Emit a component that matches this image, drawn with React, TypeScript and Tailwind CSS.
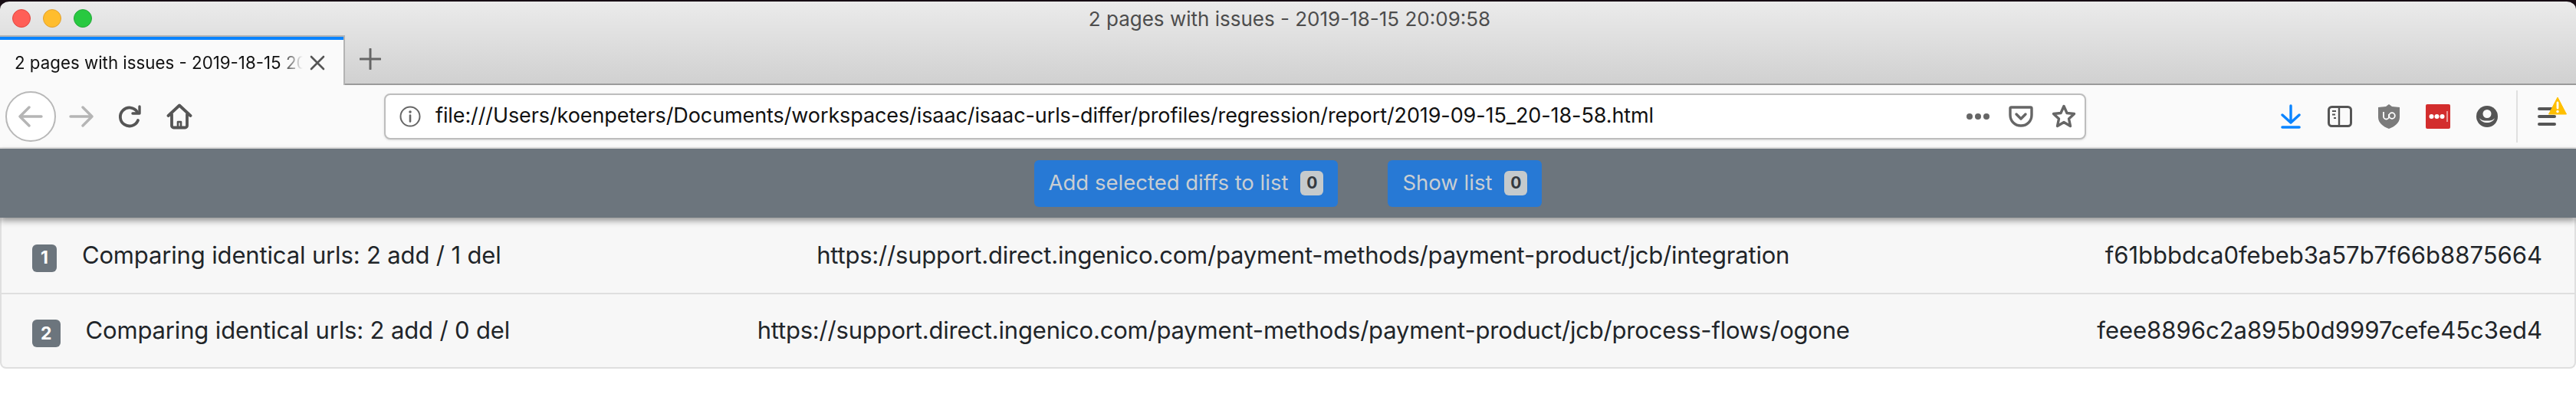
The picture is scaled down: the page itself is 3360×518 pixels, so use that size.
import React from 'react';

const FONT = 'font-["Inter","Liberation_Sans",sans-serif]';

const ROWS = [
  {
    id: 1,
    label: 'Comparing identical urls: 2 add / 1 del',
    url: 'https://support.direct.ingenico.com/payment-methods/payment-product/jcb/integration',
    hash: 'f61bbbdca0febeb3a57b7f66b8875664',
  },
  {
    id: 2,
    label: 'Comparing identical urls: 2 add / 0 del',
    url: 'https://support.direct.ingenico.com/payment-methods/payment-product/jcb/process-flows/ogone',
    hash: 'feee8896c2a895b0d9997cefe45c3ed4',
  },
];

function ActionButton({ label, count }: { label: string; count: number }) {
  return (
    <button className="flex h-[61px] items-center gap-[16px] rounded-[6px] bg-[#2779d5] px-[19px] text-[27.5px] text-[#c9ced2]">
      <span>{label}</span>
      <span className="flex h-[32px] w-[30px] items-center justify-center rounded-[6px] bg-[#c5cacc] text-[21px] font-bold text-[#343a40]">
        {count}
      </span>
    </button>
  );
}

function Row({ row, last }: { row: (typeof ROWS)[number]; last?: boolean }) {
  return (
    <div className={`flex items-center justify-between pl-[40px] pr-[42px] text-[31px] text-[#212529] ${last ? 'h-[95px]' : 'h-[100px] border-b-2 border-[#dfdfdf]'}`}>
      <div className="flex items-center gap-[33px]">
        <span className="mt-[7px] flex h-[36px] items-center rounded-[6px] bg-[#6c757d] px-[11px] text-[23px] font-bold text-white">
          {row.id}
        </span>
        <span className="tracking-[-0.15px]">{row.label}</span>
      </div>
      <span className="tracking-[-0.2px]">{row.url}</span>
      <span>{row.hash}</span>
    </div>
  );
}

export default function App() {
  return (
    <div className={`${FONT} h-[518px] w-[3360px] overflow-hidden bg-white`}>
      {/* desktop peeking out behind the window corners */}
      <div className="bg-[#170d14]">
        <div className="mt-0 rounded-t-[12px] border-t-2 border-[#170d14] bg-[linear-gradient(#ebebeb,#d0d0d0)]">
          <div className="flex h-[44px] items-center pl-[16px]">
            <div className="flex gap-[16px]">
              <span className="h-[24px] w-[24px] rounded-full border border-[#e2463f] bg-[#ff5f57]" />
              <span className="h-[24px] w-[24px] rounded-full border border-[#e1a02f] bg-[#ffbd2e]" />
              <span className="h-[24px] w-[24px] rounded-full border border-[#25a73a] bg-[#28c940]" />
            </div>
            <div className="flex-1 pr-[116px] text-center text-[26px] text-[#4d4d4d]">
              2 pages with issues - 2019-18-15 20:09:58
            </div>
          </div>
          <div className="flex h-[65px] items-stretch border-b-2 border-[#9a9a9a]">
            <div className="-mb-[2px] flex w-[450px] flex-col border-r-2 border-t-2 border-[#b4b4b4] bg-[#fafafa]">
              <div className="h-[4px] bg-[#0a84ff]" />
              <div className="flex flex-1 items-center pl-[19px]">
                <span className="w-[376px] overflow-hidden whitespace-nowrap text-[22.3px] text-[#111] [mask-image:linear-gradient(90deg,#000_346px,transparent_376px)]">
                  2 pages with issues - 2019-18-15 20:09:58
                </span>
                <svg width="20" height="20" viewBox="0 0 20 20" className="ml-[9px]" fill="none" stroke="#555" strokeWidth="2.6" strokeLinecap="round">
                  <path d="M2 2l16 16M18 2L2 18" />
                </svg>
              </div>
            </div>
            <div className="flex w-[66px] items-center justify-center pb-[2px]">
              <svg width="28" height="28" viewBox="0 0 28 28" fill="none" stroke="#666" strokeWidth="3" strokeLinecap="round">
                <path d="M14 1v26M1 14h26" />
              </svg>
            </div>
          </div>
        </div>
      </div>

      {/* toolbar */}
      <div className="flex h-[83px] items-center border-b-2 border-[#e3e3e3] bg-[#fafafa]">
        <div className="ml-[7px] flex h-[66px] w-[66px] items-center justify-center rounded-full border-2 border-[#b8b8b8] bg-white">
          <svg width="32" height="28" viewBox="0 0 32 28" fill="none" stroke="#b5b5b5" strokeWidth="3.4" strokeLinecap="round" strokeLinejoin="round">
            <path d="M2 14h28M14 2L2 14l12 12" />
          </svg>
        </div>
        <svg width="32" height="28" viewBox="0 0 32 28" className="ml-[17px]" fill="none" stroke="#b5b5b5" strokeWidth="3.4" strokeLinecap="round" strokeLinejoin="round">
          <path d="M2 14h28M18 2l12 12-12 12" />
        </svg>
        <svg width="32" height="32" viewBox="0 0 32 32" className="ml-[32px]" fill="none" stroke="#555" strokeWidth="3.8" strokeLinecap="round" strokeLinejoin="round">
          <path d="M26 21a12 12 0 1 1-1-11" />
          <path d="M28 3v9h-9" strokeWidth="3.4" />
        </svg>
        <svg width="34" height="34" viewBox="0 0 34 34" className="ml-[31px]" fill="none" stroke="#555" strokeWidth="3.8" strokeLinecap="round" strokeLinejoin="round">
          <path d="M2.500 16L17 2.500 31.500 16M7 14v15a2.500 2.500 0 0 0 2.500 2.500h15a2.500 2.500 0 0 0 2.500-2.500V14" />
          <path d="M15 31v-7h4v7" strokeWidth="2.600" />
        </svg>

        {/* address bar */}
        <div className="ml-[250px] flex h-[60px] w-[2220px] items-center rounded-[8px] border-2 border-[#bdbdbd] bg-white pr-[11px] shadow-[0_1px_3px_rgba(0,0,0,0.12)]">
          <svg width="28" height="28" viewBox="0 0 28 28" className="ml-[18px]" fill="none" stroke="#666" strokeWidth="2">
            <circle cx="14" cy="14" r="12.5" />
            <path d="M14 12.5v8" strokeWidth="2.6" strokeLinecap="round" />
            <circle cx="14" cy="8" r="1.8" fill="#666" stroke="none" />
          </svg>
          <span className="ml-[19px] flex-1 whitespace-nowrap text-[27px] tracking-[-0.1px] text-[#111]">
            file:///Users/koenpeters/Documents/workspaces/isaac/isaac-urls-differ/profiles/regression/report/2019-09-15_20-18-58.html
          </span>
          <svg width="32" height="10" viewBox="0 0 32 10" fill="#666">
            <circle cx="5" cy="5" r="4" />
            <circle cx="16" cy="5" r="4" />
            <circle cx="27" cy="5" r="4" />
          </svg>
          <svg width="32" height="28" viewBox="0 0 32 28" className="ml-[24px]" fill="none" stroke="#666" strokeWidth="3.4" strokeLinecap="round" strokeLinejoin="round">
            <path d="M3.500 2h25a1.500 1.500 0 0 1 1.500 1.500V12c0 8-6 14-14 14S2 20 2 12V3.500A1.500 1.500 0 0 1 3.500 2z" />
            <path d="M10 11l6 6 6-6" />
          </svg>
          <svg width="32" height="32" viewBox="0 0 32 32" className="ml-[24px]" fill="none" stroke="#666" strokeWidth="3.4" strokeLinejoin="round">
            <path d="M16 2.500l4 9 9.500 1-7 6.500 2 9.500L16 23.500 7.500 28.500l2-9.500-7-6.500 9.500-1z" />
          </svg>
        </div>

        {/* extensions */}
        <svg width="26" height="32" viewBox="0 0 26 32" className="ml-[254px]" fill="none" stroke="#0a84ff" strokeWidth="3.4" strokeLinecap="round" strokeLinejoin="round">
          <path d="M13 2v20M2 14l11 10 11-10" />
          <path d="M2 30h22" strokeWidth="3.6" />
        </svg>
        <svg width="32" height="28" viewBox="0 0 32 28" className="ml-[35px]" fill="none">
          <rect x="1.500" y="1.500" width="29" height="25" rx="4" stroke="#555" strokeWidth="3" />
          <path d="M15 2v24" stroke="#555" strokeWidth="2.400" />
          <path d="M6 7h5M6 11.500h4M8 16h3" stroke="#555" strokeWidth="2" />
        </svg>
        <svg width="28" height="32" viewBox="0 0 28 32" className="ml-[34px]">
          <path d="M14 0l4 3 10 1v13c0 7-6 12-14 15C6 29 0 24 0 17V4l10-1z" fill="#7b7b7b" />
          <path d="M7 10v6a3.500 3.500 0 0 0 7 0v-3" fill="none" stroke="#fff" strokeWidth="1.800" />
          <circle cx="18" cy="15" r="3.800" fill="none" stroke="#fff" strokeWidth="1.800" />
        </svg>
        <div className="ml-[34px] flex h-[32px] w-[32px] items-center rounded-[2px] bg-[#d32d2d] pl-[4px]">
          <svg width="26" height="16" viewBox="0 0 26 16" fill="#fff">
            <circle cx="3.500" cy="8" r="3" />
            <circle cx="10.500" cy="8" r="3" />
            <circle cx="17.500" cy="8" r="3" />
            <rect x="23.500" y="1" width="1" height="14" />
          </svg>
        </div>
        <svg width="28" height="28" viewBox="0 0 28 28" className="ml-[34px]">
          <circle cx="14" cy="14" r="14" fill="#555" />
          <circle cx="14" cy="10.500" r="5.500" fill="#fafafa" />
          <path d="M4 16c3 8 17 8 20 0-2 3-6 3.500-10 3.500S6 19 4 16z" fill="#fafafa" />
        </svg>
        <div className="ml-[24px] h-[68px] w-[2px] bg-[#e0e0e0]" />
        <div className="relative ml-[26px] flex w-[24px] flex-col gap-[6px]">
          <span className="h-[4px] rounded-full bg-[#555]" />
          <span className="h-[4px] rounded-full bg-[#555]" />
          <span className="h-[4px] rounded-full bg-[#555]" />
          <svg width="24" height="24" viewBox="0 0 24 24" className="absolute -top-[14px] left-[14px]">
            <path d="M12 1L23.500 23H.5z" fill="#ffbf00" stroke="#ffbf00" strokeWidth="1" strokeLinejoin="round" />
            <path d="M12 8v7" stroke="#fff" strokeWidth="2.800" strokeLinecap="round" />
            <circle cx="12" cy="19.500" r="1.700" fill="#fff" />
          </svg>
        </div>
      </div>

      {/* action bar */}
      <div className="relative z-10 flex h-[90px] items-center justify-center gap-[65px] bg-[#6c757d] shadow-[0_4px_8px_rgba(0,0,0,0.4)]">
        <ActionButton label="Add selected diffs to list" count={0} />
        <ActionButton label="Show list" count={0} />
      </div>

      {/* diff list */}
      <div className="rounded-b-[8px] border-2 border-t-0 border-[#dfdfdf] bg-[#f7f7f7]">
        {ROWS.map((row, i) => (
          <Row key={row.id} row={row} last={i === ROWS.length - 1} />
        ))}
      </div>
    </div>
  );
}
